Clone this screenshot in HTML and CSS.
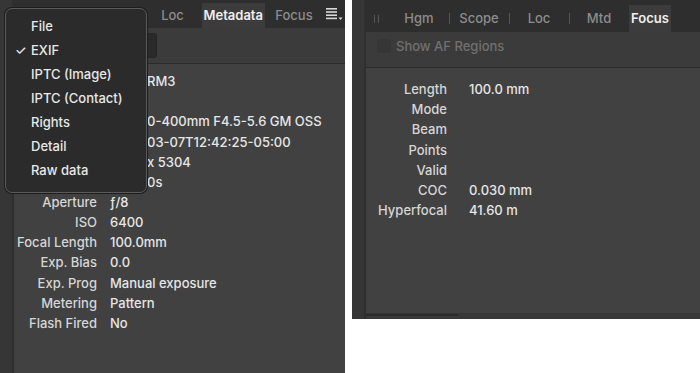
FILE: index.html
```html
<!DOCTYPE html>
<html lang="en">
<head>
    <meta charset="UTF-8">
    <title>Metadata / Focus panels</title>
    <link rel="stylesheet" href="styles.css">
</head>
<body>
    <div class="page">
        <section class="panel panel-meta">
            <div class="strip"></div>
            <div class="main">
                <div class="tabbar tabbar-end">
                    <span class="tab sep">Loc</span>
                    <span class="tab active">Metadata</span>
                    <span class="tab">Focus</span>
                    <span class="menu-btn">
                        <svg width="18" height="14" viewBox="0 0 18 14">
                            <rect x="0" y="1" width="11" height="1.6" fill="#d8d8d8"/>
                            <rect x="0" y="4.2" width="11" height="1.6" fill="#d8d8d8"/>
                            <rect x="0" y="7.4" width="11" height="1.6" fill="#d8d8d8"/>
                            <rect x="0" y="10.6" width="11" height="1.6" fill="#d8d8d8"/>
                            <path d="M12.5 10.5 L16.5 10.5 L14.5 13 Z" fill="#d8d8d8"/>
                        </svg>
                    </span>
                </div>
                <div class="toolbar">
                    <button class="dropdown"></button>
                </div>
                <div class="rows rows-meta">
                    <span class="label"></span><span class="value clip">RM3</span>
                    <span class="label"></span><span class="value"></span>
                    <span class="label"></span><span class="value clip">0-400mm F4.5-5.6 GM OSS</span>
                    <span class="label"></span><span class="value clip">03-07T12:42:25-05:00</span>
                    <span class="label"></span><span class="value clip">x 5304</span>
                    <span class="label"></span><span class="value clip">0s</span>
                    <span class="label">Aperture</span><span class="value">&#402;/8</span>
                    <span class="label">ISO</span><span class="value">6400</span>
                    <span class="label">Focal Length</span><span class="value">100.0mm</span>
                    <span class="label">Exp. Bias</span><span class="value">0.0</span>
                    <span class="label">Exp. Prog</span><span class="value">Manual exposure</span>
                    <span class="label">Metering</span><span class="value">Pattern</span>
                    <span class="label">Flash Fired</span><span class="value">No</span>
                </div>
            </div>

            <ul class="popup">
                <li>File</li>
                <li class="checked">EXIF</li>
                <li>IPTC (Image)</li>
                <li>IPTC (Contact)</li>
                <li>Rights</li>
                <li>Detail</li>
                <li>Raw data</li>
            </ul>
        </section>

        <section class="panel panel-focus">
            <div class="strip"></div>
            <div class="main">
                <div class="tabbar">
                    <span class="grip"></span>
                    <span class="tab">Hgm</span>
                    <span class="tab sep">Scope</span>
                    <span class="tab sep">Loc</span>
                    <span class="tab sep">Mtd</span>
                    <span class="tab active">Focus</span>
                </div>
                <div class="toolbar">
                    <label class="check-disabled"><span class="box"></span>Show AF Regions</label>
                </div>
                <div class="rows rows-focus">
                    <span class="label">Length</span><span class="value">100.0 mm</span>
                    <span class="label">Mode</span><span class="value"></span>
                    <span class="label">Beam</span><span class="value"></span>
                    <span class="label">Points</span><span class="value"></span>
                    <span class="label">Valid</span><span class="value"></span>
                    <span class="label">COC</span><span class="value">0.030 mm</span>
                    <span class="label">Hyperfocal</span><span class="value">41.60 m</span>
                </div>
                <div class="hscroll"><span class="thumb"></span></div>
            </div>
        </section>
    </div>
</body>
</html>
```

FILE: styles.css
```css
body {
    margin: 0;
    background-color: #ffffff;
    font-family: Inter, "Noto Sans", sans-serif;
    font-size: 13px;
    font-weight: 500;
}
.page {
    display: flex;
    align-items: flex-start;
    gap: 7px;
}
.panel {
    position: relative;
    display: flex;
    background-color: #414141;
    overflow: hidden;
}
.panel-meta {
    width: 345px;
    height: 373px;
}
.panel-focus {
    width: 348px;
    height: 319px;
}
.strip {
    width: 12px;
    flex-shrink: 0;
    background-color: #363636;
    border-right: 2px solid #2f2f2f;
}
.main {
    flex: 1;
    min-width: 0;
    display: flex;
    flex-direction: column;
}

/* tabs */
.tabbar {
    display: flex;
    align-items: flex-end;
    height: 28px;
    background-color: #2e2e2e;
    overflow: hidden;
    flex-shrink: 0;
}
.panel-focus .tabbar {
    height: 32px;
}
.tabbar-end {
    justify-content: flex-end;
}
.grip {
    flex-shrink: 0;
    width: 3px;
    height: 8px;
    margin: 0 10px 9px 8px;
    border-left: 1px solid #565656;
    border-right: 1px solid #565656;
}
.tab {
    position: relative;
    flex-shrink: 0;
    width: 60px;
    height: 25px;
    line-height: 25px;
    text-align: center;
    color: #8c8c8c;
}
.panel-meta .tab {
    width: 58px;
}
.panel-focus .tab {
    height: 27px;
    line-height: 27px;
}
.tab.sep::before {
    content: "";
    position: absolute;
    left: 0;
    top: 8px;
    height: 11px;
    border-left: 1px solid #555555;
}
.panel .tab.active {
    width: auto;
    padding: 0 2px;
    background-color: #3c3c3c;
    color: #f0f0f0;
    font-weight: 600;
}
.menu-btn {
    flex-shrink: 0;
    width: 22px;
    height: 28px;
    display: flex;
    align-items: center;
    padding-left: 3px;
    box-sizing: border-box;
}

/* toolbar under tabs */
.toolbar {
    height: 35px;
    flex-shrink: 0;
    display: flex;
    align-items: center;
    background-color: #3b3b3b;
    border-bottom: 1px solid #2c2c2c;
}
.dropdown {
    margin-left: 86px;
    width: 57px;
    height: 25px;
    background-color: #2a2a2a;
    border: 1px solid #252525;
    border-radius: 3px;
}
.check-disabled {
    display: flex;
    align-items: center;
    gap: 5px;
    margin-left: 11px;
    margin-top: -8px;
    color: #707070;
}
.check-disabled .box {
    width: 14px;
    height: 14px;
    border-radius: 3px;
    background-color: #363636;
}

/* label / value rows */
.rows {
    display: grid;
    grid-auto-rows: 20.17px;
    align-items: center;
    flex: 1;
    align-content: start;
}
.rows-meta {
    grid-template-columns: 83px 1fr;
    column-gap: 13px;
    padding-top: 7px;
}
.rows-focus {
    grid-template-columns: 81px 1fr;
    column-gap: 22px;
    padding-top: 11px;
}
.label {
    text-align: right;
    color: #d6d6d6;
    white-space: nowrap;
}
.value {
    color: #e6e6e6;
    white-space: nowrap;
}
/* values whose start is covered by the popup: only the visible tail is drawn */
.value.clip {
    padding-left: 37px;
}

.hscroll {
    height: 5px;
    flex-shrink: 0;
    background-color: #383838;
    border-top: 1px solid #363636;
}
.hscroll .thumb {
    display: block;
    width: 92px;
    height: 2px;
    background-color: #2c2c2c;
}

/* popup menu over the metadata panel */
.popup {
    position: absolute;
    left: 5px;
    top: 8px;
    width: 140px;
    height: 178px;
    margin: 0;
    padding: 5px 0 0 0;
    list-style: none;
    background-color: #2b2b2b;
    border: 1px solid #5a5a5a;
    border-radius: 7px;
    box-shadow: 0 0 0 1px #1e1e1e;
}
.popup li {
    height: 24px;
    line-height: 24px;
    padding-left: 25px;
    color: #e8e8e8;
    position: relative;
}
.popup li.checked::before {
    content: "\2713";
    position: absolute;
    left: 9px;
}
```
